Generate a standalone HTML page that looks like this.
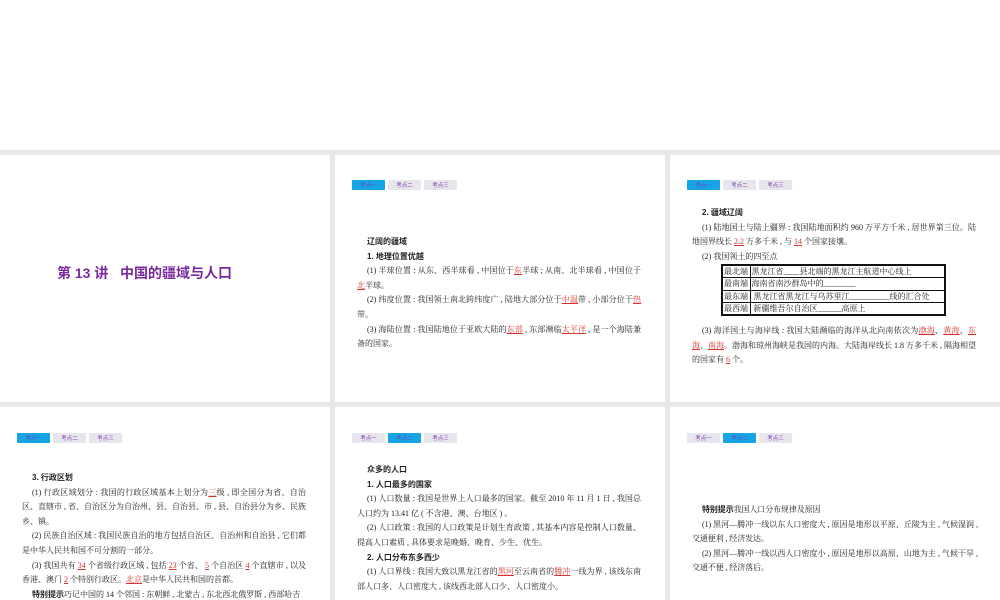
<!DOCTYPE html>
<html><head><meta charset="utf-8"><style>
*{margin:0;padding:0;box-sizing:border-box}
body{width:1000px;height:600px;overflow:hidden;background:#fff;position:relative;font-family:"Liberation Serif","Noto Serif CJK SC","Noto Sans CJK SC",serif;color:#222}
.band{position:absolute;left:0;top:150px;width:1000px;height:450px;background:#e8e8e8}
.s{position:absolute;background:#fff;overflow:hidden}
.tabs{position:absolute;display:flex;gap:3px}
.tab{width:33px;height:10px;background:#e6e6ec;color:#8a44b4;font:5.5px "Liberation Sans","Noto Sans CJK SC",sans-serif;display:flex;align-items:center;justify-content:center;border-radius:1px}
.tab.a{background:#15a5e6;color:#6a4ab0}
.t{position:absolute;font-size:8px;line-height:14.6px;text-align:justify}
.t p{text-indent:10px}
.t b{font-family:"Liberation Sans","Noto Sans CJK SC",sans-serif;font-weight:bold}
.r{color:#d9322c;text-decoration:underline}
table{position:absolute;border:2px solid #111;border-collapse:collapse;font-size:8px;line-height:11px}
td{border:1px solid #111;padding:0 1px;white-space:nowrap;height:12.5px}
</style></head><body>
<div class="band"></div>

<div class="s" style="left:0;top:155px;width:330px;height:247px">
<div style="position:absolute;left:57px;top:108px;font:bold 14px 'Liberation Sans','Noto Sans CJK SC',sans-serif;color:#7a2aa0;white-space:nowrap">第 13 讲&nbsp;&nbsp;&nbsp;中国的疆域与人口</div>
</div>

<div class="s" style="left:335px;top:155px;width:330px;height:247px">
<div class="tabs" style="left:17px;top:25px"><div class="tab a">考点一</div><div class="tab">考点二</div><div class="tab">考点三</div></div>
<div class="t" style="left:22px;top:80px;width:284px">
<p><b>辽阔的疆域</b></p>
<p><b>1. 地理位置优越</b></p>
<p>(1) 半球位置 : 从东、西半球看 , 中国位于<span class="r">东</span>半球 ; 从南、北半球看 , 中国位于<span class="r">北</span>半球。</p>
<p>(2) 纬度位置 : 我国领土南北跨纬度广 , 陆地大部分位于<span class="r">中温</span>带 , 小部分位于<span class="r">热</span>带。</p>
<p>(3) 海陆位置 : 我国陆地位于亚欧大陆的<span class="r">东部</span> , 东部濒临<span class="r">太平洋</span> , 是一个海陆兼备的国家。</p>
</div></div>

<div class="s" style="left:670px;top:155px;width:330px;height:247px">
<div class="tabs" style="left:17px;top:25px"><div class="tab a">考点一</div><div class="tab">考点二</div><div class="tab">考点三</div></div>
<div class="t" style="left:22px;top:51px;width:284px">
<p><b>2. 疆域辽阔</b></p>
<p>(1) 陆地国土与陆上疆界 : 我国陆地面积约 960 万平方千米 , 居世界第三位。陆地国界线长 <span class="r">2.2</span> 万多千米 , 与 <span class="r">14</span> 个国家接壤。</p>
<p>(2) 我国领土的四至点</p>
</div>
<table style="left:51px;top:109px;width:225px">
<tr><td style="width:28px">最北端</td><td>黑龙江省____县北端的黑龙江主航道中心线上</td></tr>
<tr><td>最南端</td><td>海南省南沙群岛中的________</td></tr>
<tr><td>最东端</td><td>&nbsp;黑龙江省黑龙江与乌苏里江__________线的汇合处</td></tr>
<tr><td>最西端</td><td>&nbsp;新疆维吾尔自治区______高原上</td></tr>
</table>
<div class="t" style="left:22px;top:169px;width:284px">
<p>(3) 海洋国土与海岸线 : 我国大陆濒临的海洋从北向南依次为<span class="r">渤海</span>、<span class="r">黄海</span>、<span class="r">东海</span>、<span class="r">南海</span>。渤海和琼州海峡是我国的内海。大陆海岸线长 1.8 万多千米 , 隔海相望的国家有 <span class="r">6</span> 个。</p>
</div></div>

<div class="s" style="left:0;top:407px;width:330px;height:193px">
<div class="tabs" style="left:17px;top:26px"><div class="tab a">考点一</div><div class="tab">考点二</div><div class="tab">考点三</div></div>
<div class="t" style="left:22px;top:64px;width:284px">
<p><b>3. 行政区划</b></p>
<p>(1) 行政区域划分 : 我国的行政区域基本上划分为<span class="r">三</span>级 , 即全国分为省、自治区、直辖市 , 省、自治区分为自治州、县、自治县、市 , 县、自治县分为乡、民族乡、镇。</p>
<p>(2) 民族自治区域 : 我国民族自治的地方包括自治区、自治州和自治县 , 它们都是中华人民共和国不可分割的一部分。</p>
<p>(3) 我国共有 <span class="r">34</span> 个省级行政区域 , 包括 <span class="r">23</span> 个省、 <span class="r">5</span> 个自治区 <span class="r">4</span> 个直辖市 , 以及香港、澳门 <span class="r">2</span> 个特别行政区。<span class="r">北京</span>是中华人民共和国的首都。</p>
<p><b>特别提示</b>巧记中国的 14 个邻国 : 东朝鲜 , 北蒙古 , 东北西北俄罗斯 , 西部哈吉</p>
</div></div>

<div class="s" style="left:335px;top:407px;width:330px;height:193px">
<div class="tabs" style="left:17px;top:26px"><div class="tab">考点一</div><div class="tab a">考点二</div><div class="tab">考点三</div></div>
<div class="t" style="left:22px;top:56px;width:284px">
<p><b>众多的人口</b></p>
<p><b>1. 人口最多的国家</b></p>
<p>(1) 人口数量 : 我国是世界上人口最多的国家。截至 2010 年 11 月 1 日 , 我国总人口约为 13.41 亿 ( 不含港、澳、台地区 ) 。</p>
<p>(2) 人口政策 : 我国的人口政策是计划生育政策 , 其基本内容是控制人口数量、提高人口素质 , 具体要求是晚婚、晚育、少生、优生。</p>
<p><b>2. 人口分布东多西少</b></p>
<p>(1) 人口界线 : 我国大致以黑龙江省的<span class="r">黑河</span>至云南省的<span class="r">腾冲</span>一线为界 , 该线东南部人口多、人口密度大 , 该线西北部人口少、人口密度小。</p>
</div></div>

<div class="s" style="left:670px;top:407px;width:330px;height:193px">
<div class="tabs" style="left:17px;top:26px"><div class="tab">考点一</div><div class="tab a">考点二</div><div class="tab">考点三</div></div>
<div class="t" style="left:22px;top:96px;width:286px;letter-spacing:-0.1px">
<p><b>特别提示</b>我国人口分布规律及原因</p>
<p>(1) 黑河—腾冲一线以东人口密度大 , 原因是地形以平原、丘陵为主 , 气候湿润 , 交通便利 , 经济发达。</p>
<p>(2) 黑河—腾冲一线以西人口密度小 , 原因是地形以高原、山地为主 , 气候干旱 , 交通不便 , 经济落后。</p>
</div></div>
</body></html>
